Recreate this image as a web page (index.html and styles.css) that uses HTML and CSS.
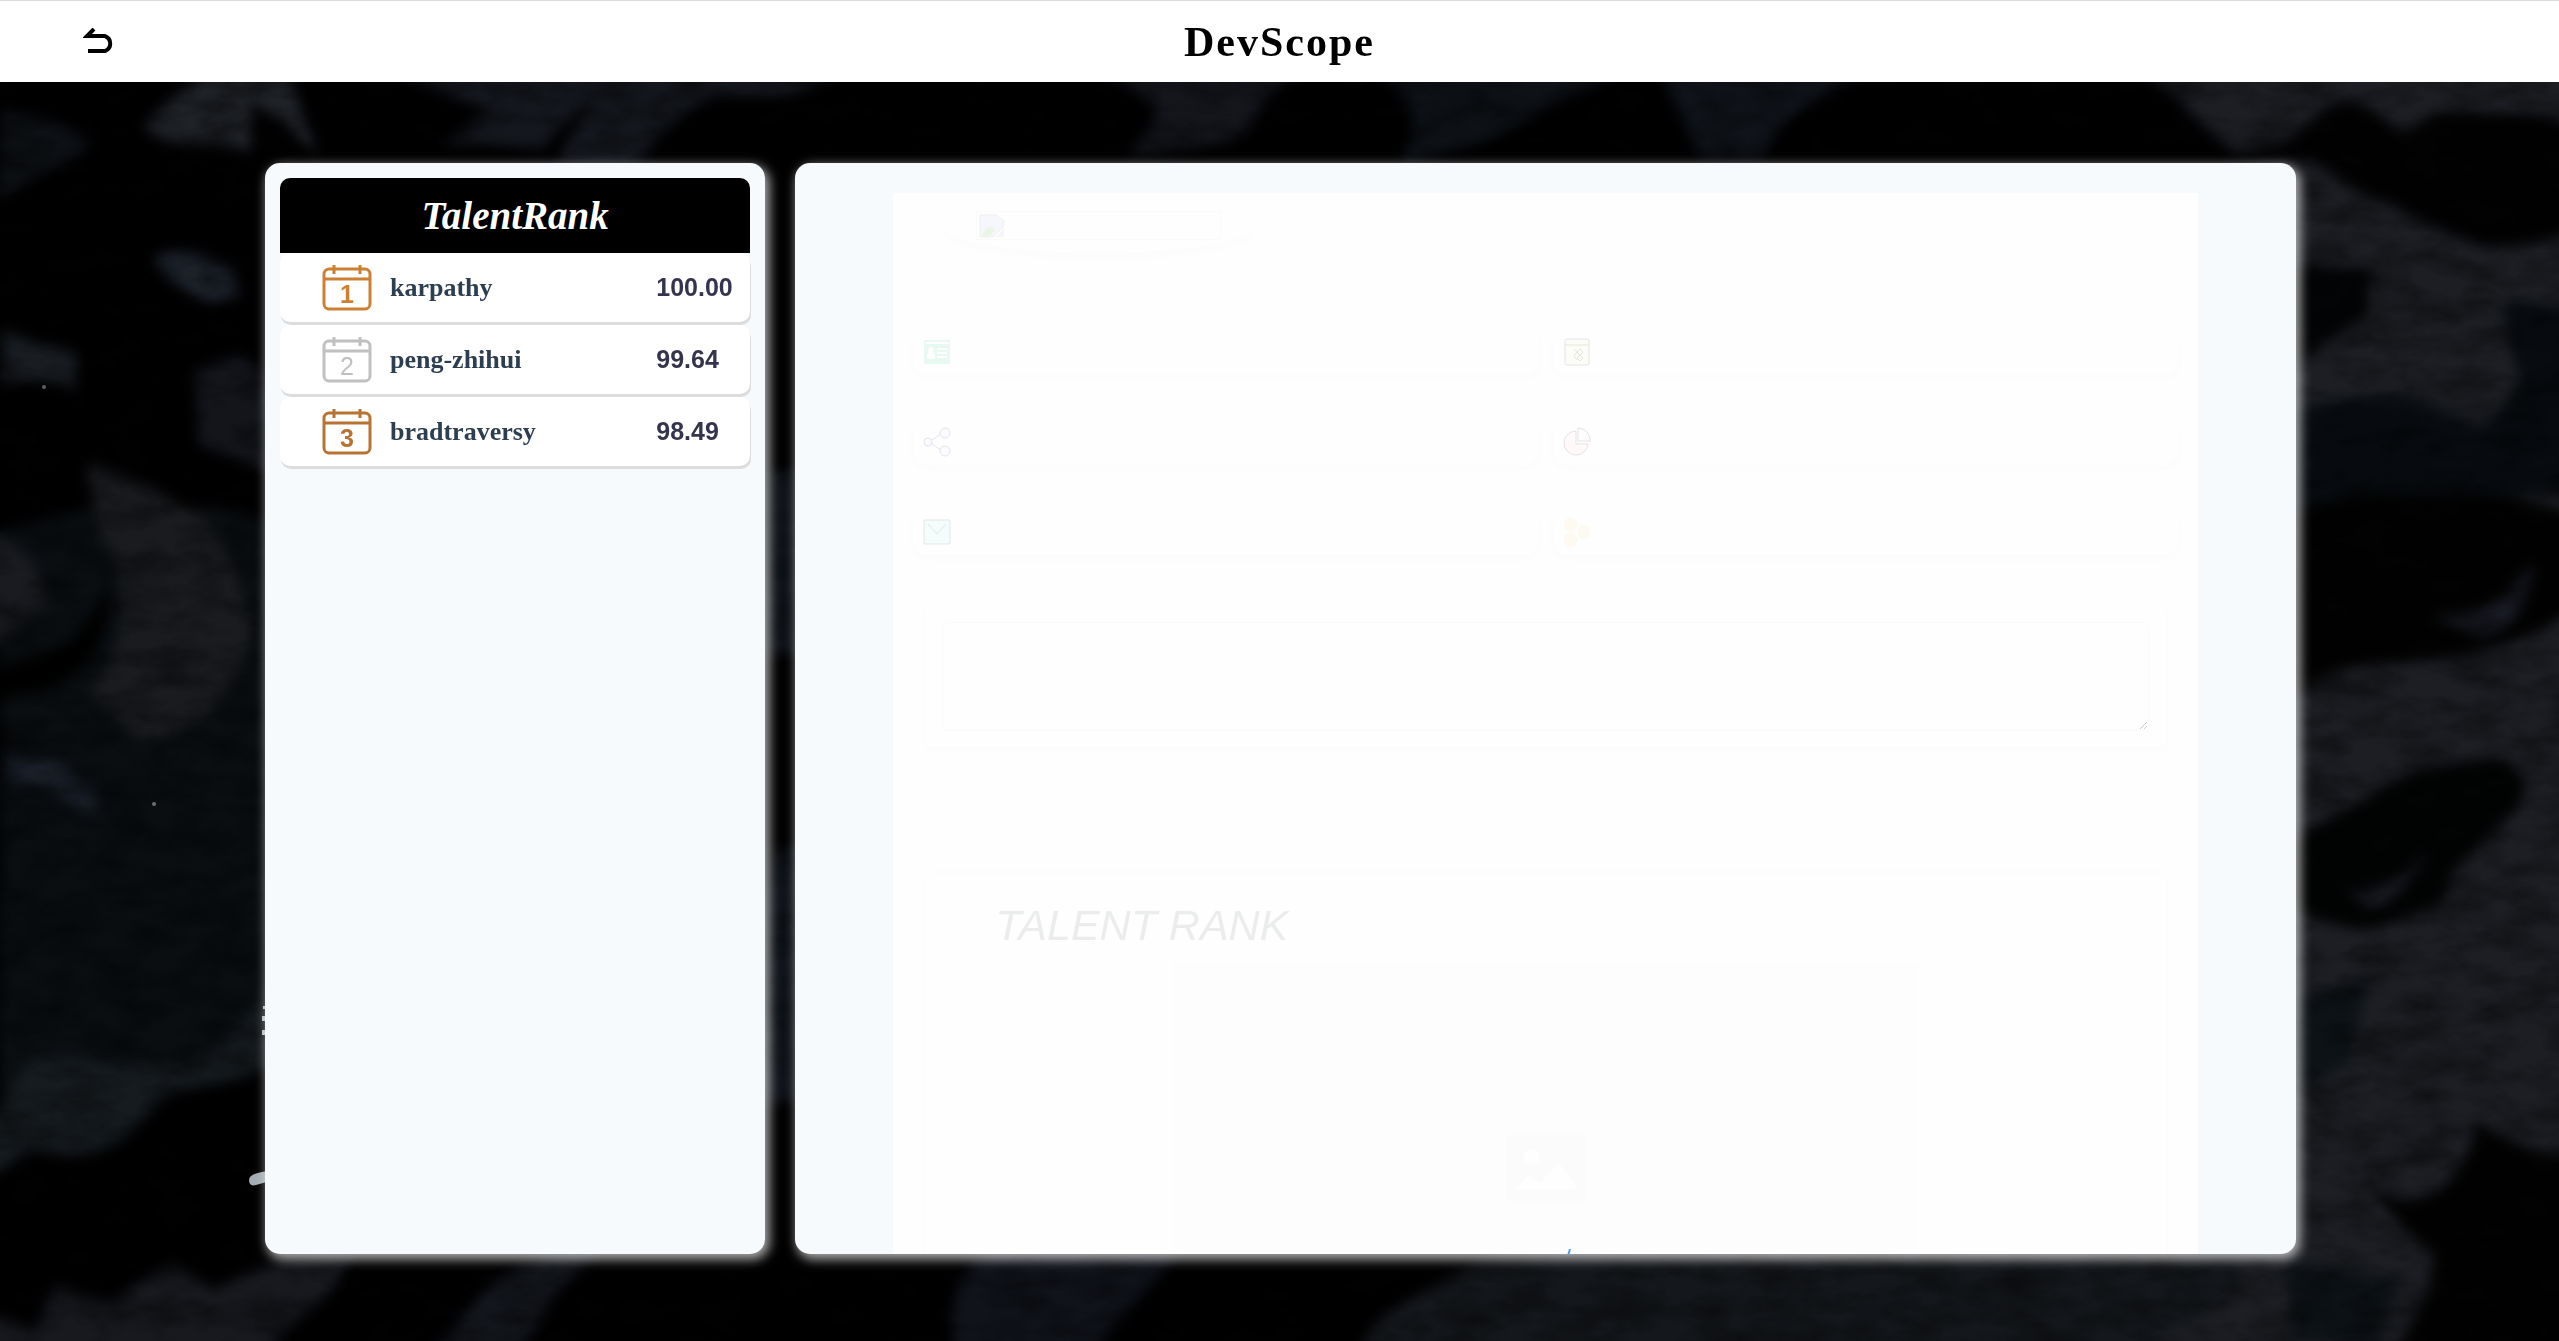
FILE: index.html
```html
<!DOCTYPE html>
<html lang="en">
<head>
<meta charset="utf-8">
<title>DevScope</title>
<link rel="stylesheet" href="styles.css">
</head>
<body>
<svg class="backdrop" viewBox="0 0 2559 1341" preserveAspectRatio="xMidYMid slice" aria-hidden="true">
  <defs>
    <filter id="smoke" x="0" y="0" width="100%" height="100%" color-interpolation-filters="sRGB">
      <feGaussianBlur stdDeviation="4" result="soft"/>
      <feTurbulence type="fractalNoise" baseFrequency="0.01" numOctaves="1" seed="4"/>
      <feDisplacementMap in="soft" scale="30" xChannelSelector="R" yChannelSelector="G"/>
      <feGaussianBlur stdDeviation="5"/>
    </filter>
    <filter id="grain" x="0" y="0" width="100%" height="100%" color-interpolation-filters="sRGB">
      <feTurbulence type="fractalNoise" baseFrequency="0.02 0.04" numOctaves="4" seed="9"/>
      <feColorMatrix values="0 0 0 0 0  0 0 0 0 0  0 0 0 0 0  0 2 0 0 -0.7"/>
    </filter>
  </defs>
  <g filter="url(#smoke)">
    <rect width="2559" height="1341" fill="#010102"/>
    <path fill="#1f2227" d="M145 125Q175 90 220 70H285L325 160 280 120 250 105 248 155 215 145 170 138Z"/>
    <path fill="#14171d" d="M400 70H830Q790 110 720 95Q670 110 640 160H560Q570 120 600 100Q560 110 540 150H440Q470 130 490 110Q440 110 400 70Z"/>
    <path fill="#0d1014" d="M0 110Q60 120 90 150L60 170 0 200Z"/>
    <path fill="#14161c" d="M1100 70H1320Q1270 80 1250 120T1130 160Q1170 130 1160 110Z"/>
    <path fill="#0e1217" d="M1380 70H1620Q1540 130 1400 160Q1430 110 1380 70Z"/>
    <path fill="#10141a" d="M1660 70H1900Q1780 100 1760 160H1700Z"/>
    <path fill="#1c212a" d="M150 250Q185 230 235 272L245 300 215 305Q180 295 150 250Z"/>
    <path fill="#191d22" d="M0 325L35 345 80 355 75 392 0 380Z"/>
    <path fill="#13151b" d="M190 375L240 360 275 390V475L205 440Z"/>
    <path fill="#0a0e11" d="M0 530Q150 480 275 530V1050L200 1060 0 1100Z"/>
    <path fill="#1a1b1f" d="M80 470L150 485Q230 530 245 600T200 720L140 740 90 690Q135 630 120 560Z"/>
    <path fill="#1a1b20" d="M-20 520L30 560 40 600-20 660Z"/>
    <path fill="#010101" d="M0 670Q80 650 110 580Q110 660 50 690L0 700Z"/>
    <path fill="#1b202a" d="M0 750L60 755 95 790V818L50 785 0 770Z"/>
    <path fill="#161b1f" d="M-20 1130L40 1060 110 1070 200 1060 275 990V1065L170 1095Q100 1165 30 1150L-20 1185Z"/>
    <path fill="#17191e" d="M-20 1310L40 1330 60 1285 110 1305 170 1268 215 1290 290 1258 350 1250 330 1290 250 1370H-20Z"/>
    <path fill="#14171d" d="M420 1370Q470 1260 600 1250L550 1310 500 1370Z"/>
    <path fill="#10131a" d="M960 1370Q930 1280 1000 1240L1180 1250 1130 1310 1080 1370Z"/>
    <path fill="#14171b" d="M1340 1370Q1400 1270 1560 1250L1900 1240 2310 1240V1370Z"/>
    <path fill="#10141a" d="M765 470H800V650H765ZM765 850H800V1100H765Z"/>
    <path fill="#1c1e23" d="M2140 70H2440L2559 60 2600 40V1380H2100L2240 1290V150Z"/>
    <path fill="#020203" d="M2080 150Q2240 165 2290 130T2360 110L2400 132 2440 105 2600 130V233L2480 240Q2420 230 2400 210T2310 155L2240 165Z"/>
    <path fill="#030405" d="M2290 260L2375 265 2365 320 2290 375Z"/>
    <path fill="#080c10" d="M2290 410Q2380 380 2440 410T2520 380Q2500 340 2510 300L2600 315V500L2480 495 2290 530Z"/>
    <path fill="#020202" d="M2290 510Q2450 480 2520 500L2600 530V600Q2520 650 2430 655T2290 700Z"/>
    <path fill="#191b23" d="M2430 615Q2500 615 2535 570Q2530 625 2470 635Z"/>
    <path fill="#020303" d="M2290 850Q2400 760 2500 752Q2560 780 2500 825T2450 890 2370 925L2290 910Z"/>
    <path fill="#191b23" d="M2350 890Q2400 890 2425 850Q2410 900 2370 905Z"/>
    <path fill="#0d1216" d="M2290 1000L2370 980 2350 1060 2290 1090ZM2290 1265L2400 1280 2380 1341H2290Z"/>
    <path fill="#020202" d="M2360 1180Q2420 1220 2450 1190T2480 1120Q2530 1160 2600 1140V1380H2380Q2430 1290 2430 1260Z"/>
  </g>
  <rect width="2559" height="1341" filter="url(#grain)" opacity="0.4"/>
  <path fill="#a3adb3" d="M270 1171Q249 1173 249 1180T256 1185L270 1181Z"/>
  <path fill="#b5bcc0" d="M263 1006h2v3h-2zM262 1016h3v5h-3zM262 1030h3v5h-3z"/>
  <circle cx="154" cy="804" r="2" fill="#6b7073"/>
  <circle cx="44" cy="387" r="2" fill="#5a5f63"/>
</svg>

<header class="topbar">
  <button class="back" aria-label="Back">
    <svg width="34" height="28" viewBox="0 0 34 28"><path d="M5 23H22A8 8 0 0 0 22 8H4L11 1" fill="none" stroke="#000" stroke-width="4"/></svg>
  </button>
  <h1 class="brand">DevScope</h1>
</header>

<main class="board">
  <aside class="panel ranking">
    <h2 class="ranking-title">TalentRank</h2>
    <ol class="ranking-list">
      <li class="rank gold">
        <svg class="medal" viewBox="0 0 50 48"><rect x="2" y="5" width="46" height="40" rx="5"/><path d="M2 15H48M12 1V10M38 1V10"/><text x="25" y="39">1</text></svg>
        <a class="rank-name" href="#karpathy">karpathy</a><span class="rank-score">100.00</span>
      </li>
      <li class="rank silver">
        <svg class="medal" viewBox="0 0 50 48"><rect x="2" y="5" width="46" height="40" rx="5"/><path d="M2 15H48M12 1V10M38 1V10"/><text x="25" y="39">2</text></svg>
        <a class="rank-name" href="#peng-zhihui">peng-zhihui</a><span class="rank-score">99.64</span>
      </li>
      <li class="rank bronze">
        <svg class="medal" viewBox="0 0 50 48"><rect x="2" y="5" width="46" height="40" rx="5"/><path d="M2 15H48M12 1V10M38 1V10"/><text x="25" y="39">3</text></svg>
        <a class="rank-name" href="#bradtraversy">bradtraversy</a><span class="rank-score">98.49</span>
      </li>
    </ol>
  </aside>

  <section class="panel detail">
    <div class="profile">
      <div class="avatar">
        <div class="avatar-frame">
          <svg width="26" height="24" viewBox="0 0 26 24"><path fill="#f6f7fd" stroke="#eeeff0" d="M1 1H18L25 7V12L14 23H1Z"/><path fill="#e9f5e5" d="M2 22L8 14Q12 11 16 16L11 22Z"/><path fill="#f5f5f8" d="M25 14V23H17Z"/></svg>
        </div>
      </div>
      <div class="facts">
        <div class="fact"><svg width="28" height="30" viewBox="0 0 28 30"><rect x="1" y="3" width="26" height="24" rx="1" fill="#e7f9f0"/><path stroke="#fff" stroke-width="2" d="M2 6H26M14 12H24M14 16H24M14 20H24"/><path fill="#fff" d="M8 10a3 3 0 0 1 2 5l2 3v4H4v-4l2-3a3 3 0 0 1 2-5Z"/></svg></div>
        <div class="fact"><svg width="28" height="30" viewBox="0 0 28 30" fill="#fdfdf8" stroke="#e4e4e4"><rect x="2" y="2" width="24" height="26" rx="2"/><path d="M2 8H26M11 12l3 3-3 4 3 4M17 12l3 3-3 3-3-3ZM17 18l3 3-3 3-3-3Z"/></svg></div>
        <div class="fact"><svg width="28" height="30" viewBox="0 0 28 30" fill="#fafaff" stroke="#e5e5e9"><path d="M9 13L18 7M9 17L18 23"/><circle cx="5" cy="15" r="4"/><circle cx="22" cy="6" r="5"/><circle cx="22" cy="24" r="5"/></svg></div>
        <div class="fact"><svg width="28" height="30" viewBox="0 0 28 30" fill="#fff9fa" stroke="#e6e2e4"><path d="M13 4A12 12 0 1 0 25 17H13Z"/><path fill="#fdfdfd" d="M15 1A12 12 0 0 1 27 14H15Z"/></svg></div>
        <div class="fact"><svg width="28" height="30" viewBox="0 0 28 30" fill="#f5fcfc" stroke="#dfe7e7"><rect x="1" y="3" width="26" height="24" rx="1"/><path fill="none" d="M5 7L14 17 23 7"/></svg></div>
        <div class="fact"><svg width="28" height="30" viewBox="0 0 28 30" fill="#fffaf1"><path d="M4 1h7l4 7-4 7H4L0 8ZM4 16h7l4 7-4 7H4L0 23ZM17 8h7l4 7-4 7h-7l-3-7Z"/></svg></div>
      </div>
      <div class="summary"><textarea aria-label="Summary"></textarea></div>
      <section class="score-card">
        <h2 class="score-title">TALENT RANK</h2>
        <div class="placeholder">
          <svg width="78" height="66" viewBox="0 0 78 66"><rect width="78" height="66" fill="#fbfbfb"/><circle cx="25" cy="22" r="8" fill="#fefefe"/><path fill="#fefefe" d="M8 54L22 40 33 48 52 28 71 54Z"/></svg>
          <svg width="60" height="60" viewBox="0 0 60 60"><path d="M54 0L48 20" fill="none" stroke="#4a9df8" stroke-width="2"/></svg>
        </div>
      </section>
    </div>
  </section>
</main>
</body>
</html>
```
FILE: styles.css
```css
* { box-sizing: border-box; }
body {
  margin: 0;
  min-height: 100vh;
  background: #020203;
  font-family: "Liberation Serif", serif;
  overflow: hidden;
}
h1, h2 { margin: 0; }
.backdrop { position: fixed; inset: 0; width: 100%; height: 100%; z-index: -1; }

.topbar {
  display: grid;
  grid-template-columns: 1fr auto 1fr;
  align-items: center;
  height: 82px;
  padding: 0 83px;
  background: #fff;
  border-top: 1px solid #dcdcdc;
}
.back { justify-self: start; padding: 0; border: 0; background: none; line-height: 0; cursor: pointer; }
.brand { font-size: 42px; line-height: 48px; font-weight: 700; letter-spacing: 2px; color: #000; }

.board { display: grid; grid-template-columns: 1fr 3fr; gap: 30px; padding: 81px 263px 0 265px; }
.panel {
  height: calc(100vh - 250px);
  min-width: 0;
  overflow: hidden;
  border-radius: 15px;
  background: #f6fafd;
  box-shadow: 3px 4px 12px 1px rgba(255, 255, 255, 0.7);
}
.ranking { padding: 15px; }
.detail { padding: 30px 98px 0; }

.ranking-title {
  height: 75px;
  border-radius: 10px 10px 0 0;
  background: #000;
  color: #fff;
  text-align: center;
  font-size: 39px;
  line-height: 75px;
  font-style: italic;
  font-weight: 700;
}
.ranking-list { display: flex; flex-direction: column; gap: 3px; margin: 0; padding: 0; list-style: none; }
.rank {
  display: grid;
  grid-template-columns: 50px 1fr 94px;
  column-gap: 18px;
  align-items: center;
  height: 69px;
  padding-left: 42px;
  border-radius: 10px;
  background: #fff;
  box-shadow: 1px 3px 0 #dcdcdc;
}
.medal { width: 50px; height: 48px; fill: none; stroke: currentColor; stroke-width: 3; }
.medal text { fill: currentColor; stroke: none; font: 25px "Liberation Sans", sans-serif; text-anchor: middle; }
.gold { color: #cd7f32; }
.silver { color: #c0c0c0; }
.bronze { color: #b87333; }
.gold text, .bronze text { font-weight: 700; }
.rank-name { color: #2c3e50; font-size: 26px; line-height: 32px; font-weight: 700; text-decoration: none; }
.rank-score { padding-bottom: 2px; color: #34344e; font: 700 25px/32px "Liberation Sans", sans-serif; }

.profile { min-height: 100%; padding: 10px 20px 0; background: #fefefe; }
.avatar {
  width: 305px;
  height: 50px;
  margin-left: 33px;
  padding: 8px 30px;
  border-radius: 50%;
  box-shadow: 0 4px 8px #fbfbfb;
}
.avatar-frame { width: 245px; height: 29px; padding: 2px; border: 1px solid #f9fbf9; line-height: 0; }
.facts { display: grid; grid-template-columns: 1fr 1fr; gap: 44px 14px; margin-top: 76px; }
.fact {
  display: flex;
  align-items: center;
  height: 46px;
  padding: 0 10px;
  border-radius: 15px;
  background: #fefefe;
  box-shadow: 0 3px 8px #fbfbfb;
}
.summary {
  height: 142px;
  margin: 50px 12px 0;
  padding: 17px;
  border-radius: 5px;
  box-shadow: 0 2px 6px #fbfbfb;
}
.summary textarea {
  display: block;
  width: 100%;
  height: 109px;
  border: 1px solid #f0f4f4;
  border-radius: 5px;
  background: #fefefe;
  resize: vertical;
  opacity: 0.3;
}
.score-card { margin: 126px 12px 0; padding: 24px 0 0; border-radius: 5px; box-shadow: 0 0 6px #fbfbfb; }
.score-title {
  padding-left: 70px;
  color: #ebecec;
  font: italic 400 43px/56px "Liberation Sans", sans-serif;
}
.placeholder {
  display: flex;
  flex-direction: column;
  align-items: center;
  gap: 48px;
  width: 60%;
  margin: 10px auto 0;
  padding-top: 172px;
  background: #fdfdfd;
}
```
